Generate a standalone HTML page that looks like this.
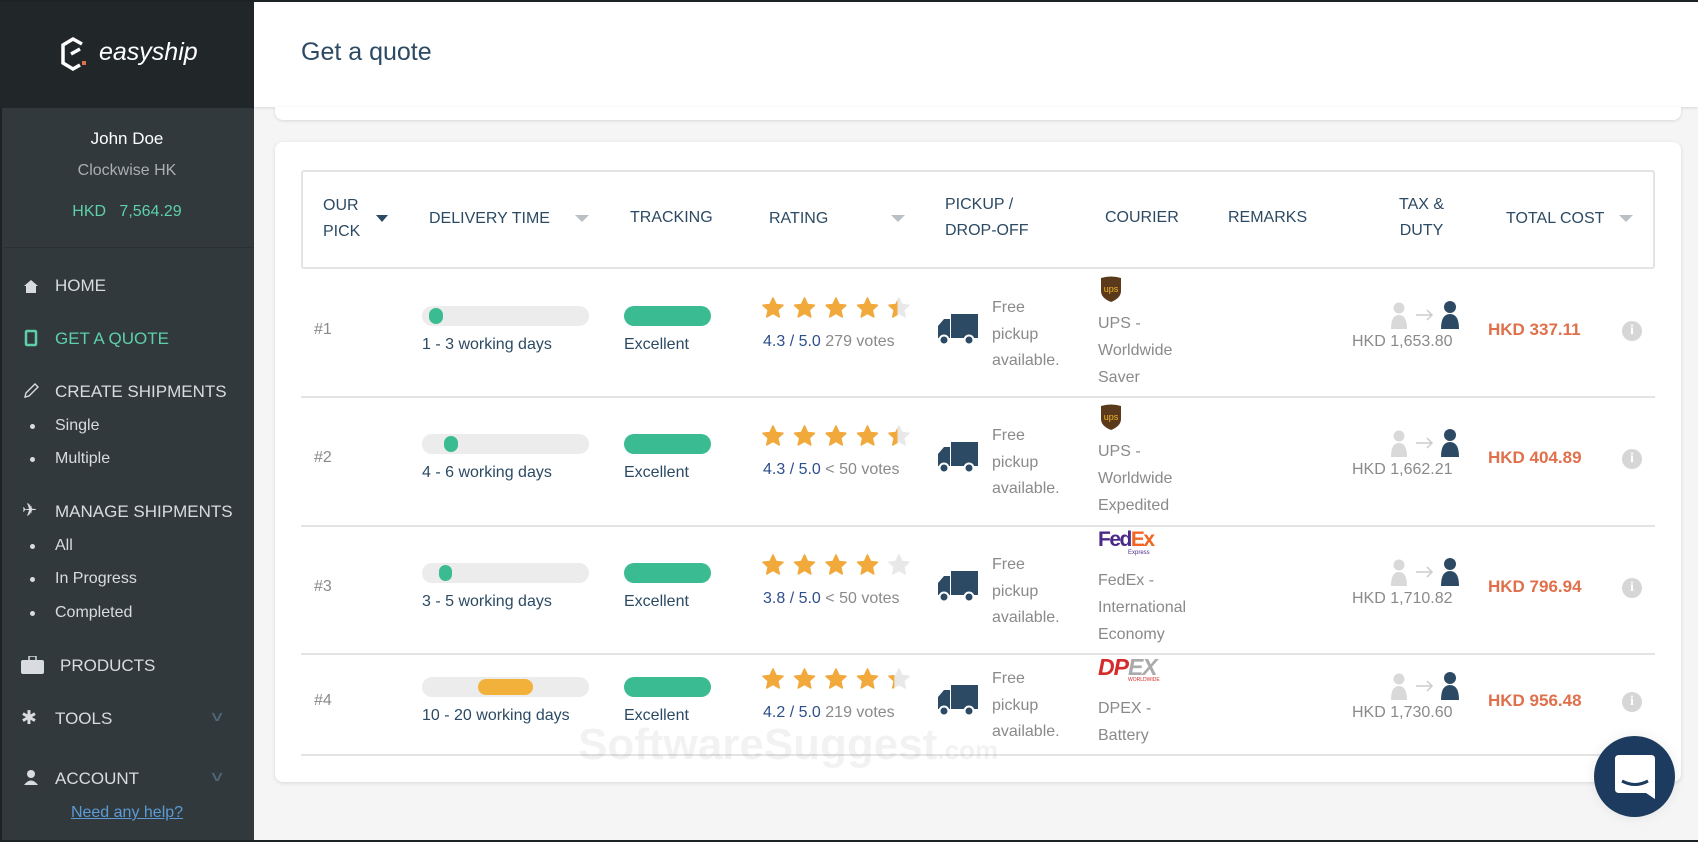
<!DOCTYPE html>
<html><head><meta charset="utf-8"><style>
*{margin:0;padding:0;box-sizing:border-box}
body{width:1698px;height:842px;overflow:hidden;background:#f5f5f5;font-family:"Liberation Sans",sans-serif;position:relative}
.a{position:absolute;white-space:nowrap}
#sb{position:absolute;left:0;top:0;width:254px;height:842px;background:#32393d;border-left:2px solid #1d2225}
#logo{position:absolute;left:0;top:0;width:254px;height:108px;background:#212629}
.nav{position:absolute;left:55px;color:#d8dcde;font-size:17px;line-height:20px}
.sub{position:absolute;left:55px;color:#d8dcde;font-size:16px;line-height:20px}
.dot{position:absolute;left:30px;width:5px;height:5px;border-radius:50%;background:#d8dcde}
.ic{position:absolute;left:22px;width:18px;height:18px}
.hd{color:#2c4a63;font-size:16px;line-height:26px}
.row{color:#2c4a63;font-size:16px}
.g{color:#8a8a8a}
.bar{position:absolute;width:167px;height:20px;border-radius:10px;background:#ececec}
.bar i{position:absolute;top:2px;height:16px;border-radius:8px;background:#3bbb91}
.trk{position:absolute;width:87px;height:20px;border-radius:10px;background:#3bbb91}
.line{position:absolute;left:301px;width:1354px;height:2px;background:#e4e4e4}
.tot{color:#e0704b;font-size:17px;font-weight:bold}
.info{position:absolute;width:20px;height:20px;border-radius:50%;background:#d6d6d6;color:#fff;font-size:14px;font-weight:bold;text-align:center;line-height:20px;font-family:"Liberation Serif",serif}
</style></head><body>
<div style="position:absolute;left:0;top:0;width:1698px;height:2px;background:#1d2225;z-index:5"></div>
<div style="position:absolute;left:0;top:840px;width:1698px;height:2px;background:#1d2225;z-index:5"></div>
<div id="sb"></div>
<div id="logo"></div>
<svg class="a" style="left:60px;top:36px" width="30" height="36" viewBox="0 0 30 36"><path d="M22 8 L13 3 L3 9 L3 27 L13 33 L20 29" fill="none" stroke="#fff" stroke-width="3.5"/><path d="M11 18 L20 13" stroke="#fff" stroke-width="3.5"/><rect x="22" y="25" width="4" height="4" fill="#e0704b"/></svg>
<div class="a" style="left:99px;top:38px;color:#fff;font-size:25px;font-style:italic">easyship</div>
<div class="a" style="left:0;width:254px;text-align:center;top:129px;color:#fff;font-size:17px">John Doe</div>
<div class="a" style="left:0;width:254px;text-align:center;top:162px;color:#a8aeb1;font-size:16px">Clockwise HK</div>
<div class="a" style="left:0;width:254px;text-align:center;top:203px;color:#5dd0a8;font-size:16px">HKD&nbsp;&nbsp; 7,564.29</div>
<div class="a" style="left:4px;top:247px;width:250px;height:1px;background:#2a3034"></div>
<svg class="ic" style="top:277px" viewBox="0 0 18 18"><path d="M2 9 L9 3 L16 9 L14 9 L14 16 L4 16 L4 9Z" fill="#d8dcde"/></svg>
<div class="nav" style="top:276px">HOME</div>
<svg class="ic" style="top:329px" viewBox="0 0 18 18"><rect x="4" y="2" width="10" height="14" rx="1" fill="none" stroke="#5dd0a8" stroke-width="2.5"/></svg>
<div class="nav" style="top:329px;color:#5dd0a8">GET A QUOTE</div>
<svg class="ic" style="top:382px" viewBox="0 0 18 18"><path d="M3 15 L4 11 L13 2 L16 5 L7 14Z" fill="none" stroke="#d8dcde" stroke-width="1.4"/></svg>
<div class="nav" style="top:382px">CREATE SHIPMENTS</div>
<div class="dot" style="top:424px"></div><div class="sub" style="top:416px">Single</div>
<div class="dot" style="top:457px"></div><div class="sub" style="top:449px">Multiple</div>
<div class="a" style="left:22px;top:500px;color:#d8dcde;font-size:18px">✈</div>
<div class="nav" style="top:502px">MANAGE SHIPMENTS</div>
<div class="dot" style="top:544px"></div><div class="sub" style="top:536px">All</div>
<div class="dot" style="top:577px"></div><div class="sub" style="top:569px">In Progress</div>
<div class="dot" style="top:611px"></div><div class="sub" style="top:603px">Completed</div>
<svg class="a" style="left:21px;top:656px" width="23" height="18" viewBox="0 0 23 18"><rect x="0" y="4" width="23" height="14" rx="2" fill="#d8dcde"/><rect x="8" y="0" width="7" height="5" rx="1" fill="none" stroke="#d8dcde" stroke-width="1.5"/></svg>
<div class="nav" style="left:60px;top:656px">PRODUCTS</div>
<div class="a" style="left:21px;top:707px;color:#d8dcde;font-size:19px">✱</div>
<div class="nav" style="top:709px">TOOLS</div>
<div class="a" style="left:212px;top:708px;color:#4e6676;font-size:14px;transform:scaleX(1.6)">∨</div>
<svg class="ic" style="top:769px" viewBox="0 0 18 18"><circle cx="9" cy="5" r="4" fill="#d8dcde"/><path d="M2 16 Q9 7 16 16Z" fill="#d8dcde"/></svg>
<div class="nav" style="top:769px">ACCOUNT</div>
<div class="a" style="left:212px;top:768px;color:#4e6676;font-size:14px;transform:scaleX(1.6)">∨</div>
<div class="a" style="left:4px;top:790px;width:250px;height:50px;background:#32393d"></div>
<div class="a" style="left:0;width:254px;text-align:center;top:804px;color:#5b9bd5;font-size:16px;text-decoration:underline">Need any help?</div>

<div class="a" style="left:254px;top:0;width:1444px;height:107px;background:#fff;box-shadow:0 1px 3px rgba(0,0,0,.12)"></div>
<div class="a" style="left:301px;top:38px;color:#2c4a63;font-size:25px">Get a quote</div>
<div class="a" style="left:275px;top:107px;width:1406px;height:13px;background:#fff;border-radius:0 0 8px 8px;box-shadow:0 1px 3px rgba(0,0,0,.12)"></div>

<div class="a" style="left:275px;top:142px;width:1406px;height:640px;background:#fff;border-radius:8px;box-shadow:0 1px 4px rgba(0,0,0,.12)"></div>
<div class="a" style="left:301px;top:170px;width:1354px;height:99px;border:2px solid #e4e4e4;border-radius:3px"></div>
<div class="a hd" style="left:323px;top:193px">OUR<br>PICK</div>
<div class="a" style="left:376px;top:215px;border:6px solid transparent;border-top:7px solid #2c4a63"></div>
<div class="a hd" style="left:429px;top:206px">DELIVERY TIME</div>
<div class="a" style="left:575px;top:215px;border:7px solid transparent;border-top:7px solid #b9c1c7"></div>
<div class="a hd" style="left:630px;top:205px">TRACKING</div>
<div class="a hd" style="left:769px;top:206px">RATING</div>
<div class="a" style="left:891px;top:215px;border:7px solid transparent;border-top:7px solid #b9c1c7"></div>
<div class="a hd" style="left:945px;top:192px">PICKUP /<br>DROP-OFF</div>
<div class="a hd" style="left:1105px;top:205px">COURIER</div>
<div class="a hd" style="left:1228px;top:205px">REMARKS</div>
<div class="a hd" style="left:1399px;top:192px;text-align:center">TAX &amp;<br>DUTY</div>
<div class="a hd" style="left:1506px;top:206px">TOTAL COST</div>
<div class="a" style="left:1619px;top:215px;border:7px solid transparent;border-top:7px solid #b9c1c7"></div>

<div class="line" style="top:396px"></div>
<div class="line" style="top:525px"></div>
<div class="line" style="top:653px"></div>
<div class="line" style="top:754px"></div>

<div id="rows"></div>
<script>
var rows=[
 {y:331,n:"#1",bx:7,bw:14,bc:"#3bbb91",del:"1 - 3 working days",st:4.3,r:"4.3 / 5.0",v:"279 votes",c:["UPS -","Worldwide","Saver"],lg:"ups",tax:"HKD 1,653.80",tot:"HKD 337.11"},
 {y:459,n:"#2",bx:22,bw:14,bc:"#3bbb91",del:"4 - 6 working days",st:4.3,r:"4.3 / 5.0",v:"< 50 votes",c:["UPS -","Worldwide","Expedited"],lg:"ups",tax:"HKD 1,662.21",tot:"HKD 404.89"},
 {y:588,n:"#3",bx:17,bw:13,bc:"#3bbb91",del:"3 - 5 working days",st:3.8,r:"3.8 / 5.0",v:"< 50 votes",c:["FedEx -","International","Economy"],lg:"fedex",tax:"HKD 1,710.82",tot:"HKD 796.94"},
 {y:702,n:"#4",bx:56,bw:55,bc:"#f2b13b",del:"10 - 20 working days",st:4.2,r:"4.2 / 5.0",v:"219 votes",c:["DPEX -","Battery"],lg:"dpex",tax:"HKD 1,730.60",tot:"HKD 956.48"}];
var SP="M11 1 L14 7.5 L21 8.2 L15.8 13 L17.3 20 L11 16.4 L4.7 20 L6.2 13 L1 8.2 L8 7.5Z";
var h="";
rows.forEach(function(r,k){
 var y=r.y;
 h+='<div class="a row g" style="left:314px;top:'+(y-10)+'px;font-size:16px">'+r.n+'</div>';
 h+='<div class="bar" style="left:422px;top:'+(y-25)+'px"><i style="left:'+r.bx+'px;width:'+r.bw+'px;background:'+r.bc+'"></i></div>';
 h+='<div class="a row" style="left:422px;top:'+(y+5)+'px">'+r.del+'</div>';
 h+='<div class="trk" style="left:624px;top:'+(y-25)+'px"></div>';
 h+='<div class="a row" style="left:624px;top:'+(y+5)+'px">Excellent</div>';
 var s='<svg class="a" style="left:762px;top:'+(y-34)+'px" width="150" height="22" viewBox="0 0 150 22"><defs><clipPath id="c'+k+'"><rect x="0" y="0" width="'+(r.st*31.5)+'" height="22"/></clipPath></defs>';
 for(var i=0;i<5;i++)s+='<path transform="translate('+(i*31.5)+',0)" d="'+SP+'" fill="#e8e8e8" stroke="#e8e8e8" stroke-width="1.5" stroke-linejoin="round"/>';
 s+='<g clip-path="url(#c'+k+')">';
 for(var i=0;i<5;i++)s+='<path transform="translate('+(i*31.5)+',0)" d="'+SP+'" fill="#f2a93b" stroke="#f2a93b" stroke-width="1.5" stroke-linejoin="round"/>';
 s+='</g></svg>';h+=s;
 h+='<div class="a" style="left:763px;top:'+(y+2)+'px;font-size:16px"><span style="color:#2e4f8c">'+r.r+'</span> <span class="g">'+r.v+'</span></div>';
 h+='<svg class="a" style="left:938px;top:'+(y-17)+'px" width="40" height="32" viewBox="0 0 40 32"><rect x="13" y="0" width="27" height="24" fill="#2c4a63"/><path d="M0 12 L6 5 L12 5 L12 24 L0 24Z" fill="#2c4a63"/><circle cx="6" cy="26" r="4.5" fill="#2c4a63" stroke="#fff" stroke-width="2"/><circle cx="31" cy="26" r="4.5" fill="#2c4a63" stroke="#fff" stroke-width="2"/></svg>';
 h+='<div class="a g" style="left:992px;top:'+(y-36)+'px;font-size:16px;line-height:26.5px">Free<br>pickup<br>available.</div>';
 var ly=y-54, d=(r.lg=="dpex")?14:0;
 if(r.lg=="ups")h+='<svg class="a" style="left:1100px;top:'+(ly-1)+'px" width="22" height="26" viewBox="0 0 22 26"><path d="M1 2 Q11 -1 21 2 L21 15 Q21 22 11 26 Q1 22 1 15Z" fill="#5a3a1a"/><text x="11" y="16" font-size="9" fill="#f5b72f" text-anchor="middle" font-family="Liberation Sans">ups</text></svg>';
 if(r.lg=="fedex")h+='<div class="a" style="left:1098px;top:'+(ly-6)+'px;font-size:21px;font-weight:bold;letter-spacing:-1.5px"><span style="color:#4b2a87">Fed</span><span style="color:#f26522">Ex</span></div><div class="a" style="left:1128px;top:'+(ly+16)+'px;font-size:6px;color:#4b2a87">Express</div>';
 if(r.lg=="dpex")h+='<div class="a" style="left:1098px;top:'+(ly+d-8)+'px;font-size:23px;font-weight:bold;font-style:italic;letter-spacing:-1px"><span style="color:#d42b2b">DP</span><span style="color:#aaa">EX</span></div><div class="a" style="left:1128px;top:'+(ly+d+15)+'px;font-size:5px;color:#d42b2b">WORLDWIDE</div>';
 h+='<div class="a g" style="left:1098px;top:'+(ly+33+d)+'px;font-size:16px;line-height:27px">'+r.c.join("<br>")+'</div>';
 h+='<svg class="a" style="left:1390px;top:'+(y-30)+'px" width="72" height="30" viewBox="0 0 72 30"><circle cx="9" cy="7" r="5.5" fill="#d9d9d9"/><path d="M1 28 Q1 14 9 14 Q17 14 17 28Z" fill="#d9d9d9"/><path d="M26 14 L42 14 M37 9 L42 14 L37 19" stroke="#ccc" stroke-width="1.5" fill="none"/><circle cx="60" cy="6" r="6" fill="#2c4a63"/><path d="M51 28 Q51 13 60 13 Q69 13 69 28Z" fill="#2c4a63"/></svg>';
 h+='<div class="a g" style="left:1352px;top:'+(y+2)+'px;font-size:16px">'+r.tax+'</div>';
 h+='<div class="a tot" style="left:1488px;top:'+(y-11)+'px">'+r.tot+'</div>';
 h+='<div class="info" style="left:1622px;top:'+(y-10)+'px">i</div>';
});
document.getElementById("rows").innerHTML=h;
</script>
<div class="a" style="left:578px;top:720px;font-size:44px;font-weight:bold;color:rgba(0,0,0,0.05)">SoftwareSuggest<span style="font-size:26px">.com</span></div>
<div class="a" style="left:1594px;top:736px;width:81px;height:81px;border-radius:50%;background:#1d3b5e;box-shadow:0 0 12px rgba(0,0,0,.08)"></div>
<svg class="a" style="left:1615px;top:755px" width="40" height="44" viewBox="0 0 40 44"><path d="M4 0 H36 Q40 0 40 4 V44 L31 38 H4 Q0 38 0 34 V4 Q0 0 4 0Z" fill="#fff"/><path d="M7 26 Q20 33 33 26" stroke="#1d3b5e" stroke-width="3" fill="none"/></svg>
</body></html>
